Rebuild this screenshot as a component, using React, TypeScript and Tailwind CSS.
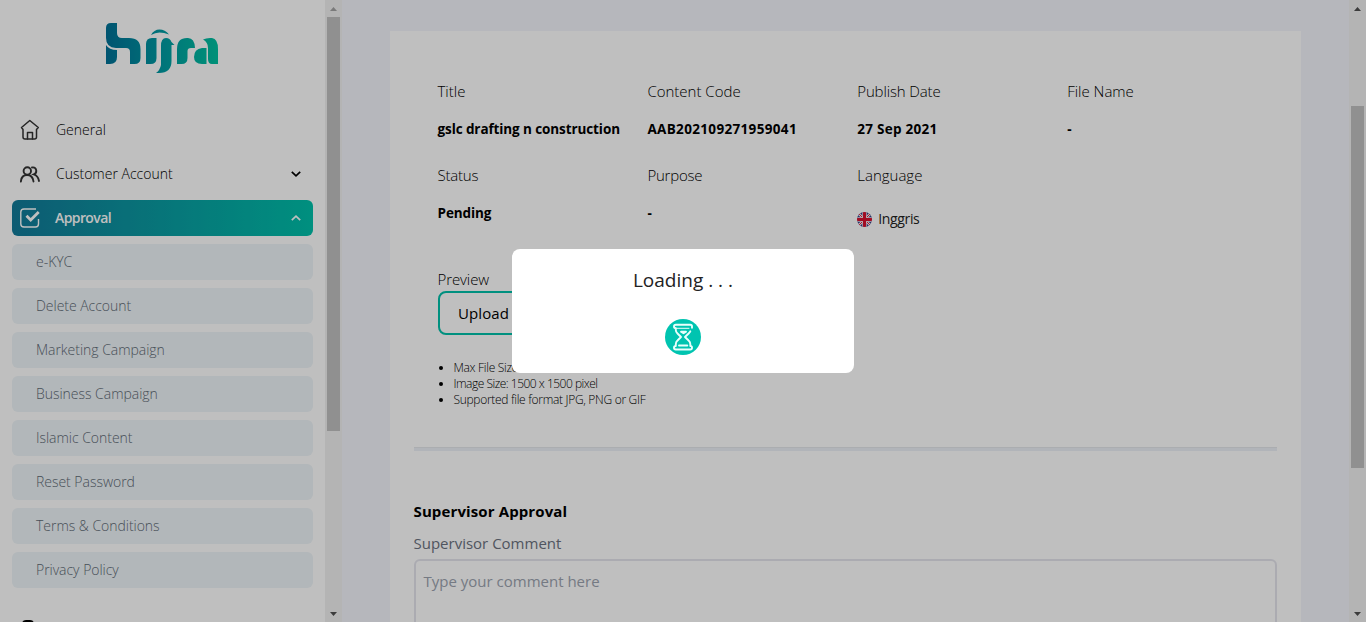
import React from "react";

const submenu = [
  "e-KYC",
  "Delete Account",
  "Marketing Campaign",
  "Business Campaign",
  "Islamic Content",
  "Reset Password",
  "Terms & Conditions",
  "Privacy Policy",
];

function HijraLogo() {
  return (
    <svg width="114" height="52" viewBox="0 0 114 52" fill="none" className="-ml-0.5">
      <defs>
        <linearGradient id="logo" x1="0" y1="0" x2="114" y2="0" gradientUnits="userSpaceOnUse">
          <stop offset="0" stopColor="#007096" />
          <stop offset="0.5" stopColor="#009ba3" />
          <stop offset="1" stopColor="#00c2a0" />
        </linearGradient>
      </defs>
      <g fill="url(#logo)">
        <path d="M1 6Q1 1 6 1H12V11Q12 16 17 16H24Q35.500 16 35.500 27V36Q35.500 42 29.500 42H25V30Q25 26 21 26H11Q1 25.500 1 16Z" />
        <path d="M1 23Q4 28 12 28V35Q12 42 5 42H1Z" />
        <path d="M41 22Q41 16 47 16H51.500V36Q51.500 42 45.500 42H41Z" />
        <path d="M46 13Q49 7.500 54.500 7.500Q60 7.500 64 12.500Q59 10.500 54.500 10.500Q50 10.500 46 13Z" />
        <path d="M56 24Q56 16 61 16Q65 16 66.500 20L69.500 23H66.500V39Q66.500 51 54 51H51Q55 48 56 43Z" />
        <path d="M72 27Q72 16 82 16H83Q89.500 16 90 26H86Q82.500 26 82.500 29V36Q82.500 42 76.500 42H72Z" />
        <path d="M98 17.500Q101 16 105 16H107Q113 17 113 27V42H107Q103 42 103 37V26Q103 20 98 17.500Z" />
        <path d="M101.500 26V42H97Q89 42 89 35Q89 27 97 26Z" />
      </g>
    </svg>
  );
}

function HomeIcon() {
  return (
    <svg width="20" height="22" viewBox="0 0 20 22" fill="none" stroke="#333" strokeWidth="1.500" strokeLinejoin="round" strokeLinecap="round">
      <path d="M1.500 8.500 9.800 1.500 18.300 8.500 16.500 10.500V18Q16.500 20 14.500 20H5Q3 20 3 18V10.500Z" />
      <path d="M7.500 20V13.500H12.500V20" />
    </svg>
  );
}

function UsersIcon() {
  return (
    <svg width="20" height="17" viewBox="0 0 20 17" fill="none" stroke="#333" strokeWidth="1.900" strokeLinecap="round">
      <circle cx="7.300" cy="5" r="3.700" />
      <path d="M.9 15.500C1.200 11.500 3.500 9 7 9S13 11.500 13.500 15.500M12 1.500C17 .7 17.500 7 13.800 8.400C17 9.500 18.500 12 19 15" />
    </svg>
  );
}

function ApprovalIcon() {
  return (
    <svg width="20" height="20" viewBox="0 0 20 20" fill="none" stroke="#fff">
      <path d="M16 1H4Q.8 1 .8 4V16Q.8 19 4 19H15.500Q18.500 19 18.500 16V11" strokeWidth="1.400" />
      <path d="m6.500 7.800 4.200 4.200 8-8" strokeWidth="2.800" />
    </svg>
  );
}

function Chevron({ up }: { up?: boolean }) {
  return (
    <svg width="10" height="6" viewBox="0 0 10 6" fill="none" stroke={up ? "#fff" : "#000"} strokeWidth="1.700">
      <path d={up ? "m.8 5.200 4.200-4 4.200 4" : "m.8.8 4.200 4 4.200-4"} />
    </svg>
  );
}

function ScrollBar({ thumb, topArrow }: { thumb: string; topArrow: string }) {
  return (
    <div className="flex h-full w-[17px] shrink-0 flex-col bg-[#f1f1f1]">
      <div className="flex h-[17px] shrink-0 items-center justify-center">
        <svg width="7" height="4" viewBox="0 0 7 4" className={topArrow}><path d="M0 4 3.500 0 7 4Z" /></svg>
      </div>
      <div className="flex-1">
        <div className={"mx-auto w-[13px] bg-[#c1c1c1] " + thumb} />
      </div>
      <div className="flex h-[17px] shrink-0 items-center justify-center">
        <svg width="7" height="4" viewBox="0 0 7 4" className="fill-[#505050]"><path d="M0 0 3.500 4 7 0Z" /></svg>
      </div>
    </div>
  );
}

function FlagIcon() {
  return (
    <svg width="15" height="15" viewBox="0 0 15 15">
      <clipPath id="flag"><circle cx="7.500" cy="7.500" r="7.500" /></clipPath>
      <g clipPath="url(#flag)">
        <path d="M0 0H15V15H0Z" fill="#39438a" />
        <path d="m0 0 15 15M15 0 0 15" stroke="#f5e8ee" strokeWidth="2.600" />
        <path d="m0 0 15 15M15 0 0 15" stroke="#d8203f" strokeWidth="1" />
        <path d="M7.500 0V15M0 7.500H15" stroke="#f5e8ee" strokeWidth="4.400" />
        <path d="M7.500 0V15M0 7.500H15" stroke="#d8102f" strokeWidth="3" />
      </g>
    </svg>
  );
}

function Hourglass() {
  return (
    <svg width="36" height="36" viewBox="0 0 36 36" fill="none">
      <circle cx="18" cy="18" r="18" fill="#00c4b0" />
      <g stroke="#e9fffc" strokeWidth="1.900" strokeLinecap="round" strokeLinejoin="round">
        <path d="M27 8.800V7.500Q27 5.800 25.300 5.800H10.800Q9 5.800 9 7.500T10.800 9.300V11Q10.800 13 12.500 14.500L16 18 12.500 21.500Q10.800 23 10.800 25V27Q9 27 9 28.700T10.800 30.500H25.300Q27 30.500 27 28.700T25.300 27V25Q25.300 23 23.600 21.500L20 18 23.600 14.500Q25 13 25.300 12.300" />
        <path d="M10.800 9.300H24" strokeWidth="1" />
        <path d="M16 12.800H21L18.500 14.300ZM14 26.500H22.300" />
      </g>
    </svg>
  );
}

function Field({ label, value, labelClass = "", valueClass = "" }: { label: string; value: string; labelClass?: string; valueClass?: string }) {
  return (
    <div className="h-[84px] whitespace-nowrap">
      <div className={"text-[15px] leading-6 font-light " + labelClass}>{label}</div>
      <div className={"mt-3.5 text-[13.5px] leading-6 font-bold " + valueClass}>{value}</div>
    </div>
  );
}

function Sidebar() {
  return (
    <aside className="flex h-full w-[342px] shrink-0 bg-white">
      <div className="h-full w-[325px] overflow-hidden px-3">
        <div className="flex h-28 justify-center pt-[22px]"><HijraLogo /></div>
        <nav className="flex flex-col gap-2 text-sm font-light">
          <div className="flex h-9 items-center pl-2">
            <span className="flex w-9"><HomeIcon /></span>General
          </div>
          <div className="flex h-9 items-center pr-3 pl-2">
            <span className="flex w-9"><UsersIcon /></span>
            <span className="flex-1">Customer Account</span><Chevron />
          </div>
          <div className="flex h-9 items-center rounded-md bg-linear-to-r from-[#127a99] to-[#00c0aa] pr-3 pl-2 font-semibold text-white">
            <span className="flex w-[35px]"><ApprovalIcon /></span>
            <span className="flex-1 tracking-[-0.6px]">Approval</span><Chevron up />
          </div>
          {submenu.map((item) => (
            <div key={item} className="flex h-9 items-center rounded-md bg-[#eef4f8] pl-6 tracking-[-0.03px] text-[#5f6b76]">{item}</div>
          ))}
        </nav>
        <div className="mt-8 ml-[10px] h-4 w-3 rounded-sm bg-black" />
      </div>
      <ScrollBar thumb="h-[414px]" topArrow="fill-[#a3a3a3]" />
    </aside>
  );
}

function Content() {
  return (
    <main className="min-w-0 flex-1 overflow-hidden bg-[#f3f5fb] px-12 pt-[31px]">
      <section className="h-[700px] bg-white px-6 pt-12">
        <div className="grid grid-cols-4 pl-[23.5px]">
          <Field label="Title" value="gslc drafting n construction" valueClass="tracking-[-0.1px]" />
          <Field label="Content Code" value="AAB202109271959041" valueClass="tracking-[0.34px]" />
          <Field label="Publish Date" value="27 Sep 2021" labelClass="tracking-[-0.13px]" valueClass="tracking-[0.26px]" />
          <Field label="File Name" value="-" />
          <Field label="Status" value="Pending" labelClass="tracking-[-0.2px]" valueClass="tracking-[-0.1px]" />
          <Field label="Purpose" value="-" labelClass="tracking-[-0.2px]" />
          <div>
            <div className="text-[15px] leading-6 font-light">Language</div>
            <div className="mt-5 flex items-center gap-1.5 text-sm leading-6 tracking-[-0.35px] text-[#222]"><FlagIcon />Inggris</div>
          </div>
        </div>
        <div className="mt-5 pl-6">
          <div className="-ml-[0.5px] text-[15px] leading-6 font-light tracking-[-0.1px]">Preview</div>
          <button className="block h-11 w-[150px] rounded-lg border-2 border-[#00c0aa] pl-[18px] text-left text-[15px] tracking-[0.1px]">Upload File</button>
          <ul className="mt-[25px] list-disc pl-[15.5px] text-xs leading-4 font-light tracking-[-0.3px]">
            <li>Max File Size: 1 MB</li>
            <li className="tracking-[-0.5px]">Image Size: 1500 x 1500 pixel</li>
            <li>Supported file format JPG, PNG or GIF</li>
          </ul>
        </div>
        <div className="mt-[39px] h-1 border-t border-[#e5e7eb] bg-[#edf0f7]" />
        <h2 className="mt-12 -ml-[0.5px] text-[15px] leading-6 font-bold tracking-[0.12px]">Supervisor Approval</h2>
        <label className="mt-2 -ml-[0.5px] block text-[15px] leading-6 text-[#6b7280]">Supervisor Comment</label>
        <div className="mt-1 h-24 rounded-md border-2 border-[#e5e5ed] px-[7.5px] pt-2 text-[15px] leading-6 text-[#9ca3af]">Type your comment here</div>
      </section>
    </main>
  );
}

export default function App() {
  return (
    <div className="relative flex h-[622px] w-full overflow-hidden font-['Open_Sans',sans-serif] text-black">
      <Sidebar />
      <Content />
      <ScrollBar thumb="mt-[89px] h-[362px]" topArrow="fill-[#505050]" />
      <div className="absolute inset-0 flex items-center justify-center bg-black/25">
        <div className="flex h-[124px] w-[342px] flex-col items-center rounded-lg bg-white pt-[17px]">
          <div className="text-[19px] leading-7 text-[#222]">Loading . . .</div>
          <div className="mt-[25px]"><Hourglass /></div>
        </div>
      </div>
    </div>
  );
}
